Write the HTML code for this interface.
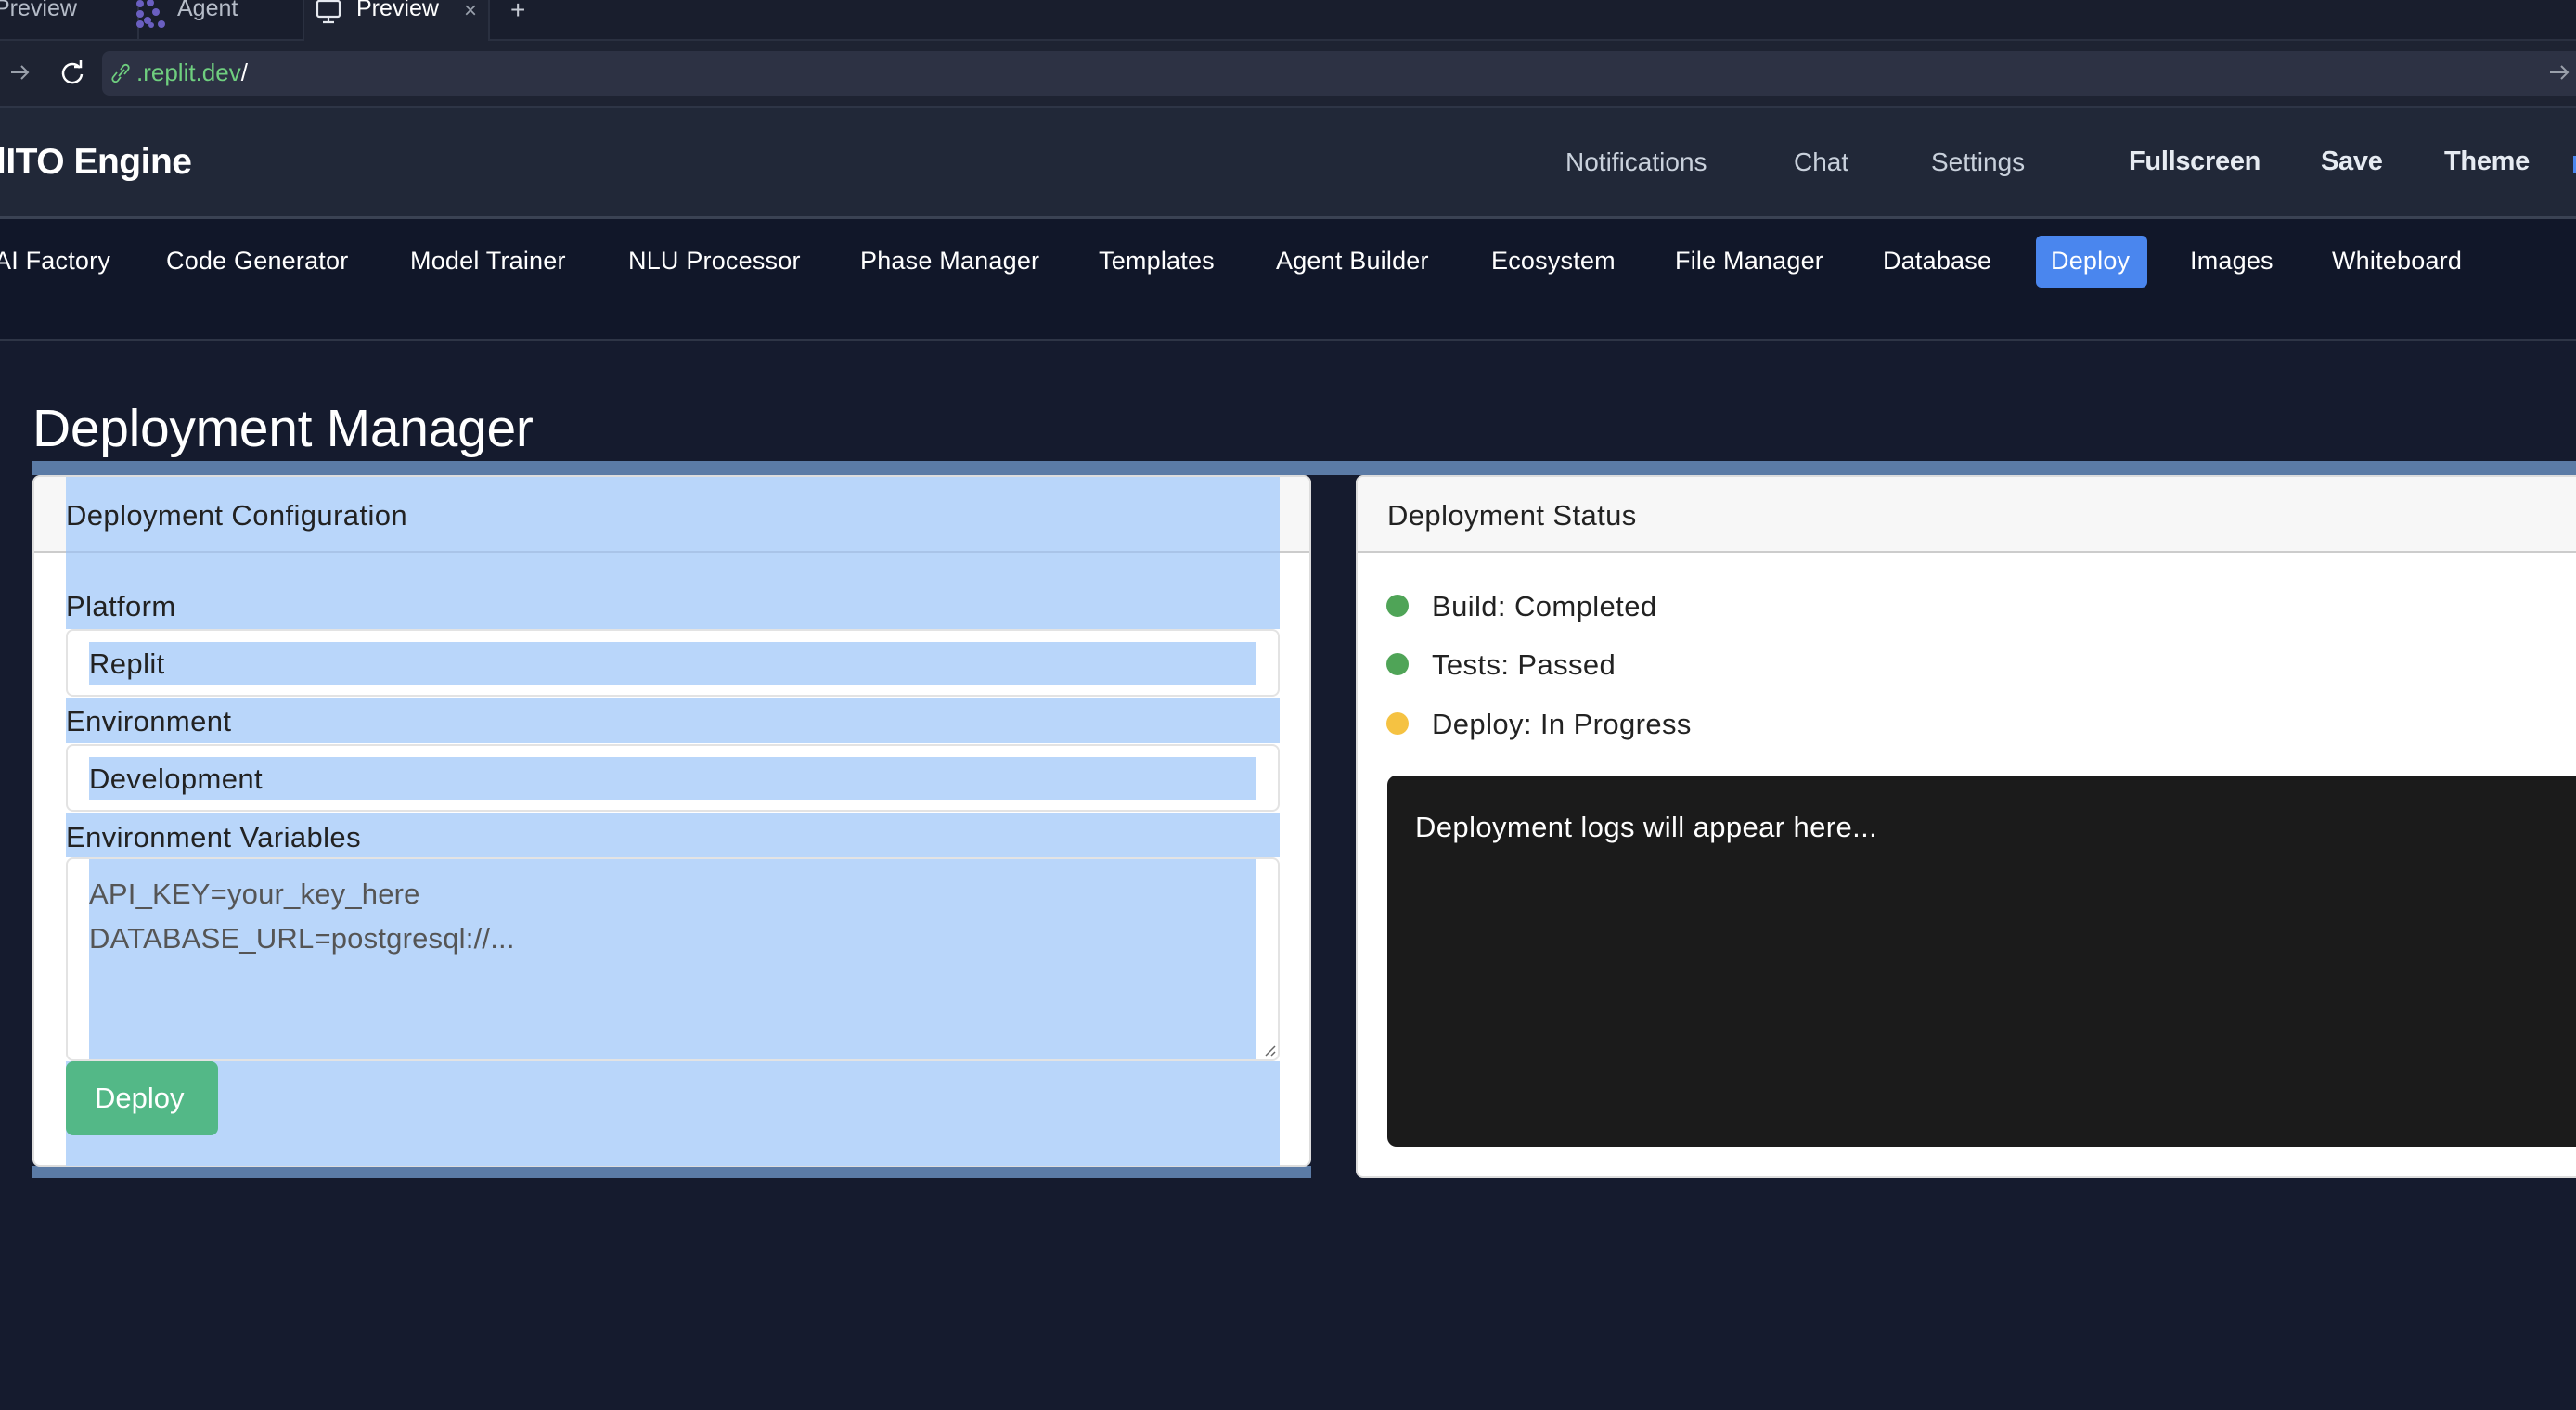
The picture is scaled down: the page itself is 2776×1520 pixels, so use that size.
<!DOCTYPE html>
<html><head><meta charset="utf-8">
<style>
*{margin:0;padding:0;box-sizing:border-box}
body{width:2776px;height:1520px;overflow:hidden;background:#151b2e;font-family:"Liberation Sans",Arial,sans-serif;position:relative}
.a{position:absolute;white-space:nowrap}
.tabbar{left:0;top:0;width:2776px;height:44px;background:#191e2d;border-bottom:2px solid #2a3040}
.urlrow{left:0;top:44px;width:2776px;height:70px;background:#1e2332}
.header{left:0;top:114px;width:2776px;height:122px;background:#212838;border-top:2px solid #2e3546;border-bottom:3px solid #3a4253}
.nav{left:0;top:236px;width:2776px;height:132px;background:#111729;border-bottom:3px solid #2e3546}
.hi{color:#c9d1dc;font-size:28px;top:159px}
.hb{color:#e6ebf2;font-size:29px;font-weight:bold;top:158px;letter-spacing:-0.3px}
.ni{color:#fff;font-size:27px;top:266px;letter-spacing:0.2px}
.lbl{color:#222;font-size:31px;letter-spacing:0.4px}
.sel{background:#b9d6fa}
</style></head><body>
<div class="a tabbar"></div>
<div class="a" style="left:148px;top:0;width:2px;height:44px;background:#2a3040"></div>
<div class="a" style="left:326px;top:0;width:202px;height:46px;background:#1e2332;border-left:2px solid #2a3040;border-right:2px solid #2a3040"></div>
<div class="a" style="left:-6px;top:-5px;font-size:25px;color:#b5bcc8">Preview</div>
<svg class="a" style="left:146px;top:0" width="34" height="30" viewBox="0 0 34 30"><g fill="#6a5fc1"><circle cx="5" cy="4" r="4"/><circle cx="16" cy="3" r="4"/><circle cx="5" cy="15" r="4"/><circle cx="22" cy="13" r="4"/><circle cx="13" cy="22" r="4"/><circle cx="5" cy="26" r="4"/><circle cx="28" cy="26" r="4"/><circle cx="17" cy="27" r="3"/></g></svg>
<div class="a" style="left:191px;top:-5px;font-size:25px;color:#b5bcc8">Agent</div>
<svg class="a" style="left:340px;top:0" width="28" height="26" viewBox="0 0 28 26"><rect x="2" y="1" width="24" height="17" rx="2" fill="none" stroke="#e6e9ef" stroke-width="2.2"/><path d="M14 18v5M8 24h12" stroke="#e6e9ef" stroke-width="2.2"/></svg>
<div class="a" style="left:384px;top:-5px;font-size:25px;color:#fff">Preview</div>
<div class="a" style="left:500px;top:-2px;font-size:24px;color:#9aa1ad">×</div>
<div class="a" style="left:550px;top:-5px;font-size:28px;color:#c5cad3">+</div>
<div class="a urlrow"></div>
<div class="a" style="left:110px;top:55px;width:2680px;height:48px;background:#2d3244;border-radius:8px"></div>
<svg class="a" style="left:8px;top:66px" width="28" height="24" viewBox="0 0 28 24"><path d="M4 12h18M15 5l7 7-7 7" fill="none" stroke="#9aa0ab" stroke-width="2"/></svg>
<svg class="a" style="left:62px;top:63px" width="32" height="32" viewBox="0 0 32 32"><path d="M24 10A10 10 0 1 0 26 17" fill="none" stroke="#fff" stroke-width="2.5"/><path d="M18 9h7V2" fill="none" stroke="#fff" stroke-width="2.5"/></svg>
<svg class="a" style="left:118px;top:66px" width="24" height="26" viewBox="0 0 24 26"><path d="M10 16l6-7M8 12l-4 5a3 3 0 0 0 5 4l3-4M16 14l4-5a3 3 0 0 0-5-4l-3 4" fill="none" stroke="#6fcf7f" stroke-width="1.8"/></svg>
<div class="a" style="left:147px;top:63px;font-size:26px;color:#6fcf7f">.replit.dev<span style="color:#fff">/</span></div>
<svg class="a" style="left:2745px;top:66px" width="26" height="24" viewBox="0 0 26 24"><path d="M3 12h18M15 5l7 7-7 7" fill="none" stroke="#9aa0ab" stroke-width="2"/></svg>
<div class="a header"></div>
<div class="a" style="left:-4px;top:153px;font-size:39px;font-weight:bold;color:#fff;letter-spacing:-0.5px">lITO Engine</div>
<div class="a hi" style="left:1687px">Notifications</div>
<div class="a hi" style="left:1933px">Chat</div>
<div class="a hi" style="left:2081px">Settings</div>
<div class="a hb" style="left:2294px">Fullscreen</div>
<div class="a hb" style="left:2501px">Save</div>
<div class="a hb" style="left:2634px">Theme</div>
<div class="a" style="left:2773px;top:168px;width:4px;height:18px;background:#4a86ee"></div>
<div class="a nav"></div>
<div class="a ni" style="left:-6px">AI Factory</div>
<div class="a ni" style="left:179px">Code Generator</div>
<div class="a ni" style="left:442px">Model Trainer</div>
<div class="a ni" style="left:677px">NLU Processor</div>
<div class="a ni" style="left:927px">Phase Manager</div>
<div class="a ni" style="left:1184px">Templates</div>
<div class="a ni" style="left:1375px">Agent Builder</div>
<div class="a ni" style="left:1607px">Ecosystem</div>
<div class="a ni" style="left:1805px">File Manager</div>
<div class="a ni" style="left:2029px">Database</div>
<div class="a" style="left:2194px;top:254px;width:120px;height:56px;background:#4a86ee;border-radius:6px"></div>
<div class="a ni" style="left:2210px">Deploy</div>
<div class="a ni" style="left:2360px">Images</div>
<div class="a ni" style="left:2513px">Whiteboard</div>
<div class="a" style="left:35px;top:429px;font-size:57px;color:#fff;letter-spacing:-0.3px">Deployment Manager</div>
<div class="a" style="left:35px;top:497px;width:2741px;height:15px;background:#5b7ba6"></div>
<div class="a" style="left:35px;top:1257px;width:1378px;height:13px;background:#5b7ba6"></div>
<!-- left card -->
<div class="a" style="left:35px;top:512px;width:1378px;height:746px;background:#fff;border:2px solid #ddd;border-radius:8px;overflow:hidden">
  <div class="a" style="left:0;top:0;width:1378px;height:82px;background:#f7f7f7;border-bottom:2px solid #ccc"></div>
</div>
<div class="a sel" style="left:71px;top:514px;width:1308px;height:164px"></div>
<div class="a" style="left:71px;top:594px;width:1308px;height:2px;background:#a9c4e8"></div>
<div class="a lbl" style="left:71px;top:538px">Deployment Configuration</div>
<div class="a lbl" style="left:71px;top:636px">Platform</div>
<div class="a" style="left:71px;top:678px;width:1308px;height:73px;border:2px solid #e3e3e3;border-radius:8px;background:#fff"></div>
<div class="a sel" style="left:96px;top:692px;width:1257px;height:46px"></div>
<div class="a lbl" style="left:96px;top:698px">Replit</div>
<div class="a sel" style="left:71px;top:752px;width:1308px;height:49px"></div>
<div class="a lbl" style="left:71px;top:760px">Environment</div>
<div class="a" style="left:71px;top:802px;width:1308px;height:73px;border:2px solid #e3e3e3;border-radius:8px;background:#fff"></div>
<div class="a sel" style="left:96px;top:816px;width:1257px;height:46px"></div>
<div class="a lbl" style="left:96px;top:822px">Development</div>
<div class="a sel" style="left:71px;top:876px;width:1308px;height:48px"></div>
<div class="a lbl" style="left:71px;top:885px">Environment Variables</div>
<div class="a" style="left:71px;top:924px;width:1308px;height:220px;border:2px solid #e3e3e3;border-radius:8px;background:#fff"></div>
<div class="a sel" style="left:96px;top:926px;width:1257px;height:216px"></div>
<div class="a" style="left:96px;top:940px;font-size:31px;color:#555;line-height:48px;letter-spacing:0.2px">API_KEY=your_key_here<br>DATABASE_URL=postgresql://...</div>
<svg class="a" style="left:1360px;top:1124px" width="16" height="16" viewBox="0 0 16 16"><path d="M14 4L4 14M14 10L10 14" stroke="#666" stroke-width="1.5"/></svg>
<div class="a sel" style="left:71px;top:1144px;width:1308px;height:113px"></div>
<div class="a" style="left:71px;top:1144px;width:164px;height:80px;background:#53b887;border-radius:8px"></div>
<div class="a" style="left:102px;top:1166px;font-size:31px;color:#fff">Deploy</div>
<!-- right card -->
<div class="a" style="left:1461px;top:512px;width:1330px;height:758px;background:#fff;border:2px solid #ddd;border-radius:8px;overflow:hidden">
  <div class="a" style="left:0;top:0;width:1330px;height:82px;background:#f7f7f7;border-bottom:2px solid #ccc"></div>
</div>
<div class="a lbl" style="left:1495px;top:538px">Deployment Status</div>
<div class="a" style="left:1494px;top:641px;width:24px;height:24px;border-radius:50%;background:#4fa457"></div>
<div class="a lbl" style="left:1543px;top:636px">Build: Completed</div>
<div class="a" style="left:1494px;top:704px;width:24px;height:24px;border-radius:50%;background:#4fa457"></div>
<div class="a lbl" style="left:1543px;top:699px">Tests: Passed</div>
<div class="a" style="left:1494px;top:768px;width:24px;height:24px;border-radius:50%;background:#f5c242"></div>
<div class="a lbl" style="left:1543px;top:763px">Deploy: In Progress</div>
<div class="a" style="left:1495px;top:836px;width:1300px;height:400px;background:#1b1b1b;border-radius:10px"></div>
<div class="a" style="left:1525px;top:874px;font-size:31px;color:#fff;letter-spacing:0.4px">Deployment logs will appear here...</div>
</body></html>
